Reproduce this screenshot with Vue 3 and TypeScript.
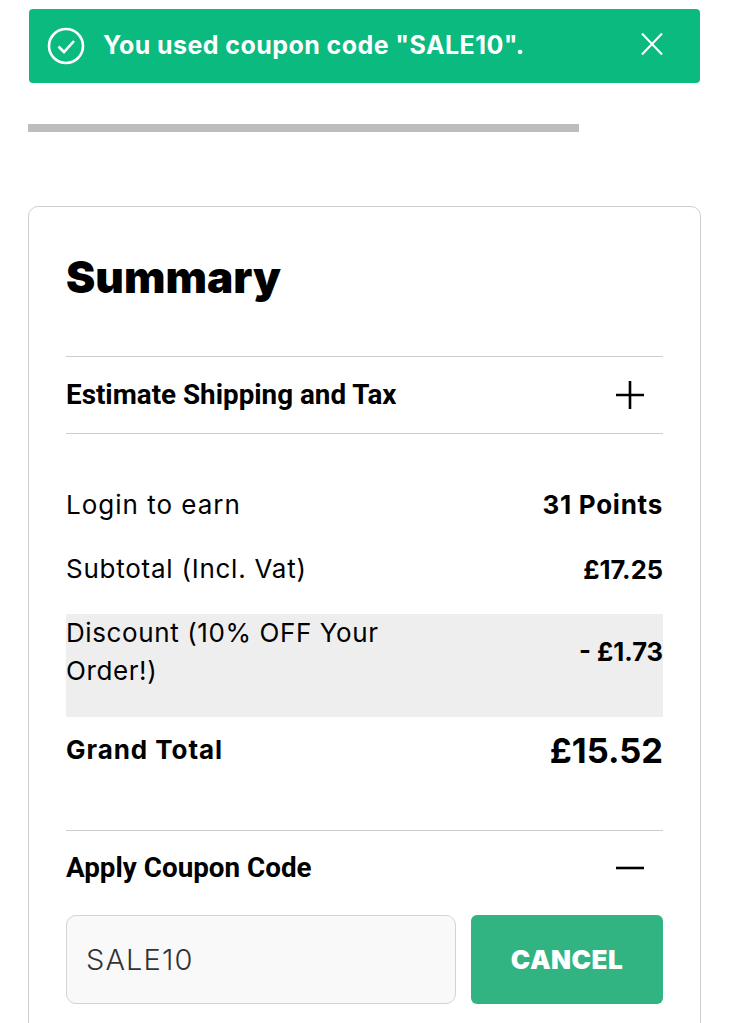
<script setup lang="ts">
interface Row { label: string; value: string; cls?: string }
const rows: Row[] = [
  { label: 'Login to earn', value: '31 Points', cls: 'earn' },
  { label: 'Subtotal (Incl. Vat)', value: '£17.25', cls: 'sub' },
  { label: 'Discount (10% OFF Your Order!)', value: '- £1.73', cls: 'discount' },
]
</script>

<template>
  <div class="page">
    <div class="alert">
      <svg class="check" viewBox="0 0 38 38" width="38" height="38" fill="none" stroke="#fff">
        <circle cx="19" cy="19" r="17" stroke-width="2.6" />
        <path d="M11.5 19.5l5.5 5.5 10-11" stroke-width="2.6" />
      </svg>
      <span class="alert-text">You used coupon code "SALE10".</span>
      <svg class="close" viewBox="0 0 24 24" width="24" height="24" fill="none" stroke="#fff" stroke-width="2">
        <path d="M2 1.500L22 22.500M22 1.500L2 22.500" />
      </svg>
    </div>
    <div class="bar"></div>
    <section class="card">
      <h2 class="title">Summary</h2>
      <div class="acc acc-ship">
        <span>Estimate Shipping and Tax</span>
        <svg viewBox="0 0 28 28" width="28" height="28" stroke="#000" stroke-width="2.6" fill="none">
          <path d="M0 14H28M14 0V28" />
        </svg>
      </div>
      <div v-for="r in rows" :key="r.label" class="row" :class="r.cls">
        <span class="label">{{ r.label }}</span>
        <span class="value">{{ r.value }}</span>
      </div>
      <div class="row grand">
        <span class="label">Grand Total</span>
        <span class="value">£15.52</span>
      </div>
      <div class="acc acc-coupon">
        <span>Apply Coupon Code</span>
        <svg viewBox="0 0 28 4" width="28" height="4" stroke="#000" stroke-width="2.6" fill="none">
          <path d="M0 2H28" />
        </svg>
      </div>
      <div class="coupon">
        <div class="input">SALE10</div>
        <button class="cancel" type="button">CANCEL</button>
      </div>
    </section>
  </div>
</template>

<style>
html, body { margin: 0; background: #fff; }
</style>

<style scoped>
.page {
  height: 1023px;
  overflow: hidden;
  box-sizing: border-box;
  padding: 9px 28px 0;
  font-family: Inter, "Liberation Sans", sans-serif;
  color: #000;
}
.alert {
  height: 74px;
  margin: 0 1px;
  background: #0bba7f;
  border-radius: 4px;
  display: flex;
  align-items: center;
  padding: 0 36px 0 18px;
  color: #fff;
}
.check { flex: none; margin-right: 18px; }
.alert-text {
  flex: 1;
  font-size: 25px;
  font-weight: 700;
  letter-spacing: 0.43px;
  margin-top: -2px;
}
.close { flex: none; margin-top: -4px; }
.bar {
  width: 551px;
  height: 8px;
  margin-top: 41px;
  background: #bdbdbd;
}
.card {
  margin-top: 74px;
  border: 1px solid #cfcfcf;
  border-radius: 10px;
  padding: 0 37px 60px;
  height: 900px;
  box-sizing: border-box;
}
.title {
  margin: 41px 0 0;
  height: 108px;
  font-family: Inter, sans-serif;
  font-size: 44px;
  font-weight: 900;
  line-height: 58px;
  letter-spacing: 0;
}
.acc {
  display: flex;
  align-items: center;
  justify-content: space-between;
  font-family: Roboto, sans-serif;
  font-size: 27.8px;
  font-weight: 700;
  padding-right: 19px;
}
.acc-ship {
  border-top: 1px solid #cdcdcd;
  border-bottom: 1px solid #cdcdcd;
  height: 76px;
}
.acc span { margin-top: -2px; }
.acc-coupon {
  border-top: 1px solid #cdcdcd;
  height: 74px;
  margin-top: 61px;
}
.row {
  display: flex;
  justify-content: space-between;
  align-items: center;
  font-size: 26px;
  letter-spacing: 0.75px;
}
.value { font-weight: 700; flex: none; }
.earn { margin-top: 51px; height: 38px; }
.earn .label { letter-spacing: 1px; }
.sub { margin-top: 27px; height: 38px; }
.sub .label { margin-top: -2px; }
.sub .value, .discount .value { font-size: 25.5px; letter-spacing: 0; }
.discount {
  margin-top: 26px;
  height: 103px;
  background: #eeeeee;
  align-items: flex-start;
  line-height: 38px;
}
.discount .label { width: 340px; letter-spacing: 0.6px; }
.discount .value { margin-top: 19px; }
.grand { margin-top: 14px; height: 38px; }
.grand .label { font-weight: 700; letter-spacing: 0.95px; margin-top: -2px; }
.grand .value { font-size: 34.5px; letter-spacing: 0; }
.coupon {
  display: flex;
  gap: 15px;
  margin-top: 10px;
}
.input {
  width: 390px;
  height: 89px;
  box-sizing: border-box;
  border: 1.5px solid #d3d3d3;
  border-radius: 10px;
  background: #f9f9f9;
  padding: 0 19px;
  display: flex;
  align-items: center;
  font-size: 29px;
  font-weight: 300;
  letter-spacing: 1.1px;
  color: #333;
}
.cancel {
  width: 192px;
  height: 89px;
  border: 0;
  border-radius: 6px;
  background: #32b482;
  color: #fff;
  font-family: Inter, sans-serif;
  font-size: 26px;
  font-weight: 900;
  letter-spacing: 0.5px;
}
</style>
